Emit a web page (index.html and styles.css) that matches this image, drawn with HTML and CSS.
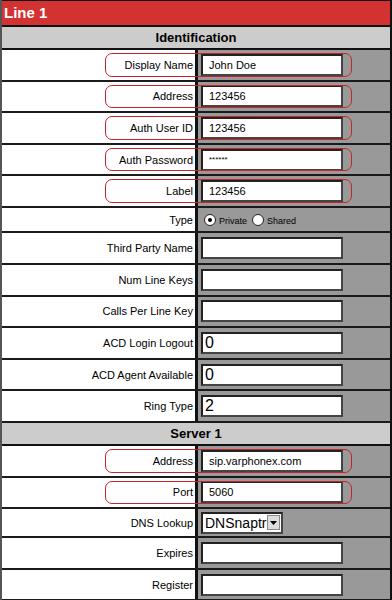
FILE: index.html
```html
<!DOCTYPE html>
<html lang="en">

<head>
    <meta charset="UTF-8" />
    <meta name="viewport" content="width=device-width, initial-scale=1.0" />
    <title>Line 1</title>
    <link rel="stylesheet" href="styles.css">
</head>

<body>
    <div class="panel">
        <div class="title">Line 1</div>

        <!-- Identification -->
        <div class="section">Identification</div>
        <div class="row req">
            <div class="label">Display Name</div>
            <div class="field"><input class="text" type="text" value="John Doe"></div>
            <span class="ring"></span>
        </div>
        <div class="row req">
            <div class="label">Address</div>
            <div class="field"><input class="text" type="text" value="123456"></div>
            <span class="ring"></span>
        </div>
        <div class="row req">
            <div class="label">Auth User ID</div>
            <div class="field"><input class="text" type="text" value="123456"></div>
            <span class="ring"></span>
        </div>
        <div class="row req">
            <div class="label">Auth Password</div>
            <div class="field"><input class="text pw" type="text" value="******"></div>
            <span class="ring"></span>
        </div>
        <div class="row req">
            <div class="label">Label</div>
            <div class="field"><input class="text" type="text" value="123456"></div>
            <span class="ring"></span>
        </div>
        <div class="row short">
            <div class="label">Type</div>
            <div class="field radios">
                <span class="radio on"></span><span class="opt">Private</span>
                <span class="radio"></span><span class="opt">Shared</span>
            </div>
        </div>
        <div class="row">
            <div class="label">Third Party Name</div>
            <div class="field"><input class="text" type="text" value=""></div>
        </div>
        <div class="row">
            <div class="label">Num Line Keys</div>
            <div class="field"><input class="text" type="text" value=""></div>
        </div>
        <div class="row">
            <div class="label">Calls Per Line Key</div>
            <div class="field"><input class="text" type="text" value=""></div>
        </div>
        <div class="row">
            <div class="label">ACD Login Logout</div>
            <div class="field"><input class="text big" type="text" value="0"></div>
        </div>
        <div class="row">
            <div class="label">ACD Agent Available</div>
            <div class="field"><input class="text big" type="text" value="0"></div>
        </div>
        <div class="row">
            <div class="label">Ring Type</div>
            <div class="field"><input class="text big" type="text" value="2"></div>
        </div>

        <!-- Server 1 -->
        <div class="section">Server 1</div>
        <div class="row req">
            <div class="label">Address</div>
            <div class="field"><input class="text" type="text" value="sip.varphonex.com"></div>
            <span class="ring"></span>
        </div>
        <div class="row req">
            <div class="label">Port</div>
            <div class="field"><input class="text" type="text" value="5060"></div>
            <span class="ring"></span>
        </div>
        <div class="row dns">
            <div class="label">DNS Lookup</div>
            <div class="field">
                <div class="select">
                    <span>DNSnaptr</span>
                    <span class="arrow"><svg width="7" height="4" viewBox="0 0 7 4"><path d="M0 0h7L3.5 4z" fill="#000"/></svg></span>
                </div>
            </div>
        </div>
        <div class="row">
            <div class="label">Expires</div>
            <div class="field"><input class="text" type="text" value=""></div>
        </div>
        <div class="row">
            <div class="label">Register</div>
            <div class="field"><input class="text" type="text" value=""></div>
        </div>
    </div>
</body>

</html>
```

FILE: styles.css
```css
body {
    margin: 0;
    font-family: 'Liberation Sans', Arial, sans-serif;
    background-color: #fff;
    overflow: hidden;
}

.panel {
    width: 392px;
    border-left: 2px solid #555;
    border-right: 2px solid #111;
    box-sizing: border-box;
}

.title {
    background-color: #d33233;
    color: #fff;
    font-weight: bold;
    font-size: 15px;
    line-height: 24px;
    height: 24px;
    padding-left: 2px;
    border-top: 1px solid #111;
    border-bottom: 2px solid #111;
}

.section {
    background-color: #cccccc;
    text-align: center;
    font-weight: bold;
    font-size: 13px;
    height: 21px;
    line-height: 21px;
    border-bottom: 2px solid #111;
}

.row {
    position: relative;
    display: grid;
    grid-template-columns: 196px 1fr;
    height: 29.6px;
    border-bottom: 2px solid #1a1a1a;
}

.row.short {
    height: 23.5px;
}

.row.dns {
    height: 27px;
}

.label {
    background-color: #fff;
    border-right: 3px solid #111;
    font-size: 11px;
    text-align: right;
    padding-right: 2px;
    display: flex;
    align-items: center;
    justify-content: flex-end;
}

.field {
    background-color: #999;
    display: flex;
    align-items: center;
    padding-left: 3px;
}

.text {
    width: 142px;
    height: 22px;
    box-sizing: border-box;
    border: 2px solid;
    border-color: #222 #444 #444 #222;
    background: #fff;
    font-family: 'Liberation Sans', Arial, sans-serif;
    font-size: 11px;
    padding: 0 0 0 6px;
    color: #000;
    margin: 0;
}

.text.pw {
    font-size: 8px;
}

.text.big {
    font-size: 16px;
    padding-left: 2px;
}

/* red outline around required fields */
.ring {
    position: absolute;
    left: 103px;
    top: 3px;
    width: 245px;
    bottom: 3px;
    border: 1px solid #c8232c;
    border-radius: 7px;
    pointer-events: none;
}

.radios {
    font-size: 9px;
    gap: 3px;
    padding-left: 6px;
}

.radio {
    width: 12px;
    height: 12px;
    border: 1px solid #222;
    border-radius: 50%;
    background: #fff;
    box-sizing: border-box;
    display: flex;
    align-items: center;
    justify-content: center;
}

.radio.on::after {
    content: '';
    width: 4px;
    height: 4px;
    border-radius: 50%;
    background: #000;
}

.opt {
    margin-right: 2px;
    margin-top: 2px;
}

.select {
    width: 82px;
    height: 22px;
    box-sizing: border-box;
    border: 2px solid;
    border-color: #222 #444 #444 #222;
    background: #fff;
    font-size: 14px;
    display: flex;
    align-items: center;
    justify-content: space-between;
    padding-left: 2px;
    padding-right: 1px;
}

.arrow {
    width: 13px;
    height: 15px;
    background: #ddd;
    border: 1px solid #888;
    box-sizing: border-box;
    display: flex;
    align-items: center;
    justify-content: center;
}
```
